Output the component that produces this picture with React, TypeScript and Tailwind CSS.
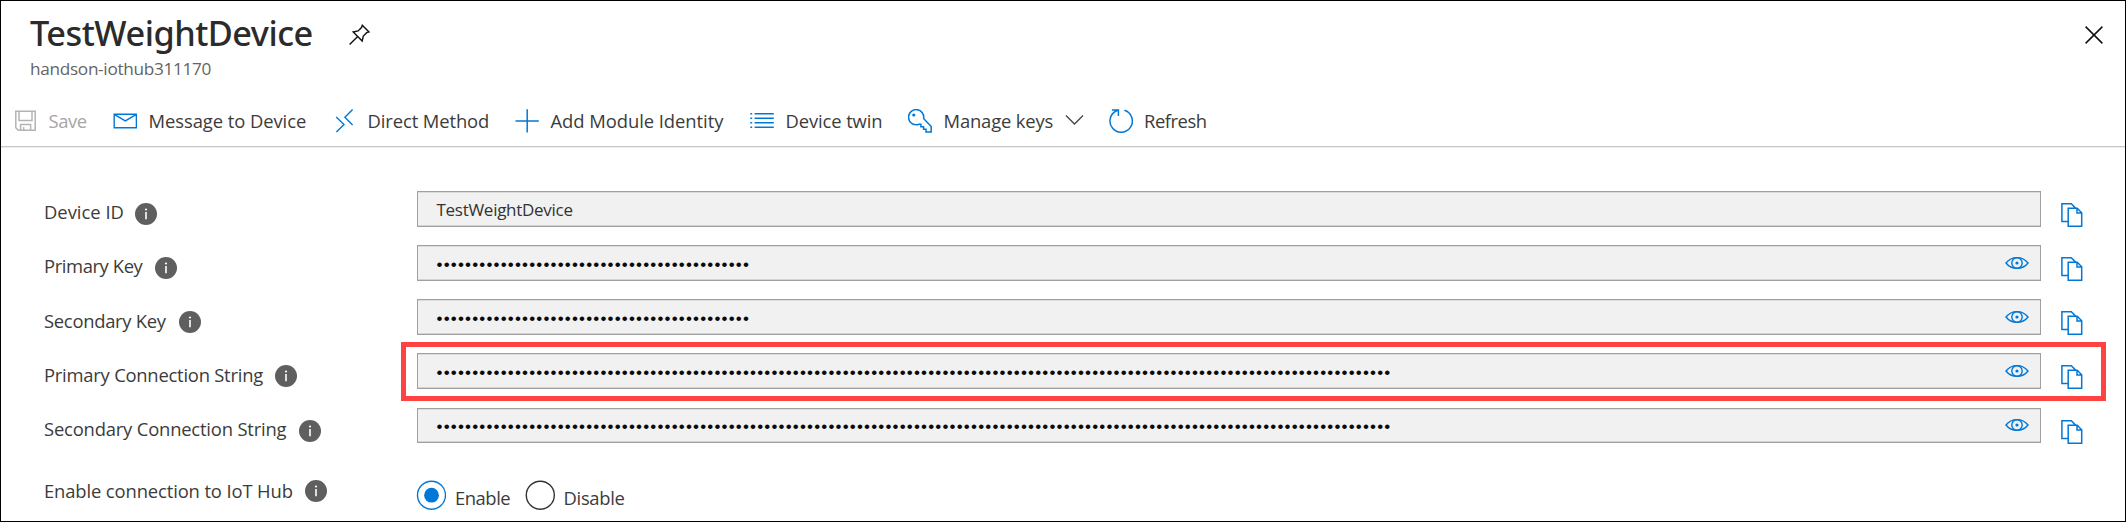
import React from "react";

const BLUE = "#0078d7";

const PinIcon = () => (
  <svg width="24" height="24" viewBox="0 0 24 24" fill="none" stroke="#111" strokeWidth="1.4" className="shrink-0">
    <path d="M14.3 2.2 21 8.9 18.7 9.7 15.3 13.1 14.2 18 5.2 9 10.1 7.9 13.5 4.5ZM9.7 13.5 1.6 21.6" />
  </svg>
);

const CloseIcon = () => (
  <svg width="18" height="18" viewBox="0 0 18 18" fill="none" stroke="#111" strokeWidth="1.5" className="shrink-0">
    <path d="M.6.6 17.4 17.4M17.4.6.6 17.4" />
  </svg>
);

const SaveIcon = () => (
  <svg width="24" height="24" viewBox="0 0 24 24" fill="none" stroke="#b4b4b4" strokeWidth="1.5">
    <path d="M1.8 2.2H21.2V21.2H4.2L1.8 18.8ZM5 2.2V11.4H18V2.2M6.6 21.2V15.4H16.6V21.2M9.7 18V21.2" />
  </svg>
);

const MailIcon = () => (
  <svg width="24" height="24" viewBox="0 0 24 24" fill="none" stroke={BLUE} strokeWidth="1.4">
    <path d="M1.2 5.2H23.4V18.7H1.2ZM1.2 5.4 12.3 11.9 23.4 5.4" />
  </svg>
);

const MethodIcon = () => (
  <svg width="24" height="24" viewBox="0 0 24 24" fill="none" stroke={BLUE} strokeWidth="1.4">
    <path d="M20.6.6 12.9 8.2 20.6 15.9M4.2 7.9 12 15.5 4.4 23.1" />
  </svg>
);

const PlusIcon = () => (
  <svg width="24" height="24" viewBox="0 0 24 24" fill="none" stroke={BLUE} strokeWidth="1.5">
    <path d="M.5 12H23.8M12.2.3V23.6" />
  </svg>
);

const ListIcon = () => (
  <svg width="24" height="24" viewBox="0 0 24 24" fill="none" stroke={BLUE} strokeWidth="1.4">
    <path d="M4.6 4.8H23.8M4.6 9.3H23.8M4.6 13.8H23.8M4.6 18.3H23.8M.3 4.8H2.2M.3 9.3H2.2M.3 13.8H2.2M.3 18.3H2.2" />
  </svg>
);

const KeyIcon = () => (
  <svg width="24" height="24" viewBox="0 0 24 24" fill="none" stroke={BLUE} strokeWidth="1.5">
    <path d="M15.6 9.6 23.2 17.5V23H18V20.3H15.6V17.8H12.9V15.2H10.9C10 15.6 9.1 15.8 8.2 15.8A7.6 7.6 0 1 1 15.6 9.6Z" />
    <circle cx="5.8" cy="6" r="1.6" fill={BLUE} stroke="none" />
  </svg>
);

const ChevronIcon = () => (
  <svg width="19" height="12" viewBox="0 0 19 12" fill="none" stroke="#444" strokeWidth="1.3" className="mb-0.5">
    <path d="M1 1.5 9.5 10 18 1.5" />
  </svg>
);

const RefreshIcon = () => (
  <svg width="24" height="24" viewBox="0 0 24 24" fill="none" stroke={BLUE} strokeWidth="1.5">
    <path d="M15.4 1.3A11.2 11.2 0 1 1 7.6 1.8L9.4 1M2.9.9H9.4V7.1" />
  </svg>
);

const EyeIcon = () => (
  <svg width="24" height="14" viewBox="0 0 24 14" fill="none" stroke={BLUE} strokeWidth="1.4" className="shrink-0">
    <path d="M1 7C6.5-.2 17.5-.2 23 7 17.5 14.2 6.5 14.2 1 7Z" />
    <circle cx="12" cy="7" r="5.2" />
    <circle cx="12" cy="7" r="1.6" fill={BLUE} stroke="none" />
  </svg>
);

const CopyIcon = () => (
  <svg width="22" height="24" viewBox="0 0 22 24" fill="none" stroke={BLUE} strokeWidth="1.5" className="shrink-0">
    <path d="M6.8 18.5H.9V.8H10.3L14.6 5.1M7.2 5.3H16.2L20.7 9.8V23.2H7.2ZM16 5.5V10H20.5" />
  </svg>
);

const InfoIcon = () => (
  <svg width="22" height="22" viewBox="0 0 22 22" className="shrink-0">
    <circle cx="11" cy="11" r="11" fill="#5f5f5f" />
    <path d="M11 8.9V16.3" stroke="#fff" strokeWidth="1.6" />
    <circle cx="11" cy="6.5" r="1.1" fill="#fff" />
  </svg>
);

type Command = {
  label: string;
  Icon: React.FC;
  box: string;
  text: string;
  menu?: boolean;
};

const commands: Command[] = [
  { label: "Save", Icon: SaveIcon, box: "w-[99px]", text: "ml-[10.5px] text-[#a6a6a6] tracking-[-0.4px]" },
  { label: "Message to Device", Icon: MailIcon, box: "w-[219px]", text: "ml-[11.5px] tracking-[-0.06px]" },
  { label: "Direct Method", Icon: MethodIcon, box: "w-[183px]", text: "ml-[11.5px] tracking-[-0.1px]" },
  { label: "Add Module Identity", Icon: PlusIcon, box: "w-[235px]", text: "ml-[11.5px] tracking-[-0.05px]" },
  { label: "Device twin", Icon: ListIcon, box: "w-[158px]", text: "ml-[11.5px] tracking-[-0.11px]" },
  { label: "Manage keys", Icon: KeyIcon, box: "w-[200.5px]", text: "ml-[11.5px] w-[121px] tracking-[-0.15px]", menu: true },
  { label: "Refresh", Icon: RefreshIcon, box: "w-[120px]", text: "ml-[11.5px] tracking-[-0.45px]" },
];

type Field = {
  label: string;
  tracking: string;
  labelWidth: string;
  value?: string;
  dots?: number;
  highlight?: boolean;
};

const fields: Field[] = [
  { label: "Device ID", tracking: "tracking-[0px]", labelWidth: "w-[91px]", value: "TestWeightDevice" },
  { label: "Primary Key", tracking: "tracking-[-0.4px]", labelWidth: "w-[110.5px]", dots: 44 },
  { label: "Secondary Key", tracking: "tracking-[-0.28px]", labelWidth: "w-[134.5px]", dots: 44 },
  { label: "Primary Connection String", tracking: "tracking-[-0.23px]", labelWidth: "w-[231px]", dots: 134, highlight: true },
  { label: "Secondary Connection String", tracking: "tracking-[-0.18px]", labelWidth: "w-[255px]", dots: 134 },
];

const FieldRow = ({ label, tracking, labelWidth, value, dots, highlight }: Field) => (
  <div className="relative flex h-[54.17px] items-start">
    <div className="flex w-[373px] items-start">
      <span className={`mt-[8.3px] leading-[25px] ${tracking} ${labelWidth}`}>{label}</span>
      <span className="mt-3">
        <InfoIcon />
      </span>
    </div>
    <div className="flex h-[35.5px] w-[1624px] items-center justify-between border border-[#a0a0a0] bg-[#f1f1f1] pr-[11.5px] pl-[18.5px] shadow-[inset_0_1px_0_#dcdcdc,inset_0_-1px_0_#d4d4d4]">
      {value ? (
        <span className="mt-0.5 text-[17px] leading-6 tracking-[-0.28px] text-[#333]">{value}</span>
      ) : (
        <span className="mt-[4px] font-['Liberation_Sans',sans-serif] text-[17px] leading-6 tracking-[1.175px] text-[#0a0a0a]">
          {"•".repeat(dots ?? 0)}
        </span>
      )}
      {dots ? <EyeIcon /> : null}
    </div>
    <span className="mt-3 ml-5">
      <CopyIcon />
    </span>
    {highlight && (
      <div className="pointer-events-none absolute top-[-11.5px] left-[357px] h-[59px] w-[1705px] border-5 border-[#ff4242]" />
    )}
  </div>
);

export default function App() {
  return (
    <div className="h-[522px] w-[2126px] overflow-hidden border border-black bg-white font-['Open_Sans','Noto_Sans',sans-serif] text-[18.4px] text-[#3b3b3b]">
      <header className="flex h-[95px] items-start justify-between pt-2.5 pr-[22px] pl-[29px]">
        <div>
          <div className="flex items-start">
            <h1 className="w-[318px] font-['Noto_Sans','Open_Sans',sans-serif] text-[34.3px] leading-[44px] font-medium tracking-[-0.5px] text-[#2b2b2b]">
              TestWeightDevice
            </h1>
            <span className="mt-3">
              <PinIcon />
            </span>
          </div>
          <p className="mt-1 text-[17.2px] leading-5 tracking-[-0.3px] text-[#646464]">handson-iothub311170</p>
        </div>
        <span className="mt-[15px]">
          <CloseIcon />
        </span>
      </header>

      <nav className="flex h-[51px] items-center border-b border-[#c8c8c8] pl-[13px] shadow-[0_1px_0_#ececec]">
        {commands.map(({ label, Icon, box, text, menu }) => (
          <div key={label} className={`flex items-center ${box}`}>
            <Icon />
            <span className={`leading-6 whitespace-nowrap ${text}`}>{label}</span>
            {menu && <ChevronIcon />}
          </div>
        ))}
      </nav>

      <main className="pt-[44px] pl-[43px]">
        {fields.map((field) => (
          <FieldRow key={field.label} {...field} />
        ))}
        <div className="flex items-start">
          <div className="flex w-[373px] items-start">
            <span className="mt-4 w-[260.5px] leading-[25px] tracking-[-0.12px]">Enable connection to IoT Hub</span>
            <span className="mt-[18px]">
              <InfoIcon />
            </span>
          </div>
          <div className="flex pt-[18.5px]">
            <svg width="30" height="30" viewBox="0 0 30 30" fill="none" className="-ml-px">
              <circle cx="15.5" cy="15.2" r="14" stroke={BLUE} strokeWidth="1.4" />
              <circle cx="15.5" cy="15.2" r="7.4" fill={BLUE} />
            </svg>
            <span className="mt-1.5 ml-[9px] w-[69.5px] leading-6 tracking-[-0.45px]">Enable</span>
            <svg width="30" height="30" viewBox="0 0 30 30" fill="none">
              <circle cx="15.3" cy="15.2" r="14" stroke="#333" strokeWidth="1.4" />
            </svg>
            <span className="mt-1.5 ml-[9px] leading-6 tracking-[-0.3px]">Disable</span>
          </div>
        </div>
      </main>
    </div>
  );
}
